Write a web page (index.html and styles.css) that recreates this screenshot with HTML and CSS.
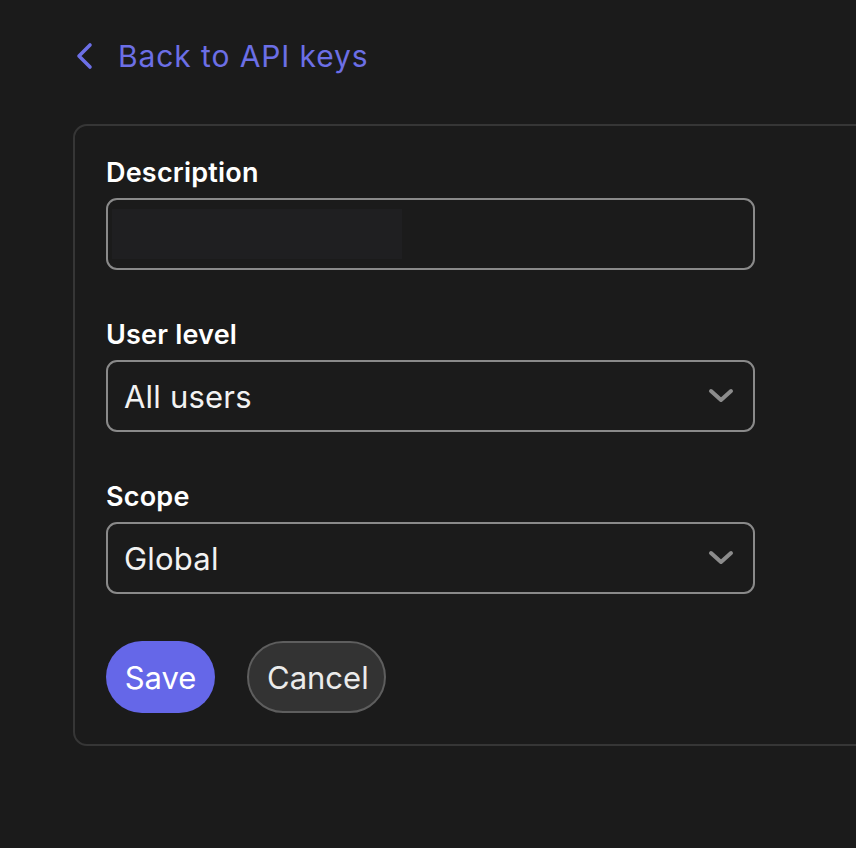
FILE: index.html
```html
<!DOCTYPE html>
<html lang="en">
<head>
<meta charset="utf-8">
<title>Edit API key</title>
<link rel="stylesheet" href="styles.css">
</head>
<body>
<main class="page">
  <a class="back-link" href="#">
    <svg class="back-icon" viewBox="0 0 18 28" width="18" height="28" aria-hidden="true"><path d="M15 3 L4 14 L15 25" fill="none" stroke="currentColor" stroke-width="3.6" stroke-linecap="round" stroke-linejoin="round"/></svg>
    <span>Back to API keys</span>
  </a>
  <form class="card">
    <div class="field">
      <label class="label">Description</label>
      <div class="input"><div class="input-fill"></div></div>
    </div>
    <div class="field">
      <label class="label">User level</label>
      <div class="select"><span>All users</span>
        <svg class="chev" viewBox="0 0 26 16" width="26" height="16" aria-hidden="true"><path d="M3 3 L13 12 L23 3" fill="none" stroke="currentColor" stroke-width="4" stroke-linecap="round" stroke-linejoin="round"/></svg>
      </div>
    </div>
    <div class="field">
      <label class="label">Scope</label>
      <div class="select"><span>Global</span>
        <svg class="chev" viewBox="0 0 26 16" width="26" height="16" aria-hidden="true"><path d="M3 3 L13 12 L23 3" fill="none" stroke="currentColor" stroke-width="4" stroke-linecap="round" stroke-linejoin="round"/></svg>
      </div>
    </div>
    <div class="actions">
      <button type="button" class="btn btn-primary">Save</button>
      <button type="button" class="btn btn-secondary">Cancel</button>
    </div>
  </form>
</main>
</body>
</html>
```
FILE: styles.css
```css
html, body {
  margin: 0;
  padding: 0;
  background: #1b1b1b;
  overflow: hidden;
  font-family: Inter, "Noto Sans", "Liberation Sans", sans-serif;
  color: #ffffff;
}
.page {
  padding: 36px 0 0 73px;
}
.back-link {
  display: inline-flex;
  align-items: center;
  gap: 25px;
  margin-left: 2px;
  color: #6c6fe6;
  text-decoration: none;
  font-size: 30px;
  letter-spacing: 0.9px;
  line-height: 40px;
  height: 40px;
}
.back-icon {
  display: block;
}
.card {
  margin-top: 48px;
  width: 840px;
  box-sizing: border-box;
  border: 2px solid #363636;
  border-radius: 14px;
  padding: 30px 31px 31px 31px;
  display: flex;
  flex-direction: column;
  gap: 48px;
}
.field {
  display: flex;
  flex-direction: column;
  gap: 8px;
  width: 649px;
}
.label {
  font-size: 27px;
  font-weight: 600;
  line-height: 34px;
  letter-spacing: 0.2px;
  color: #ffffff;
}
.input, .select {
  box-sizing: border-box;
  height: 72px;
  border: 2px solid #8a8a8a;
  border-radius: 11px;
  background: #1b1b1b;
}
.input {
  padding: 9px 0 9px 4px;
}
.input-fill {
  width: 290px;
  height: 50px;
  background: #1f1f21;
}
.select {
  display: flex;
  align-items: center;
  justify-content: space-between;
  padding: 0 19px 0 16px;
  font-size: 31px;
  letter-spacing: 0.2px;
  color: #f2f2f2;
}
.chev {
  color: #8c8c8c;
  display: block;
}
.actions {
  display: flex;
  gap: 32px;
  margin-top: -1px;
}
.btn {
  font-family: inherit;
  font-size: 31px;
  height: 72px;
  border-radius: 36px;
  padding: 0 18px;
  cursor: pointer;
}
.btn-primary {
  background: #6567e8;
  border: none;
  color: #ffffff;
  width: 109px;
}
.btn-secondary {
  background: #333333;
  border: 2px solid #5e5e5e;
  color: #ebebeb;
  width: 139px;
}
```
